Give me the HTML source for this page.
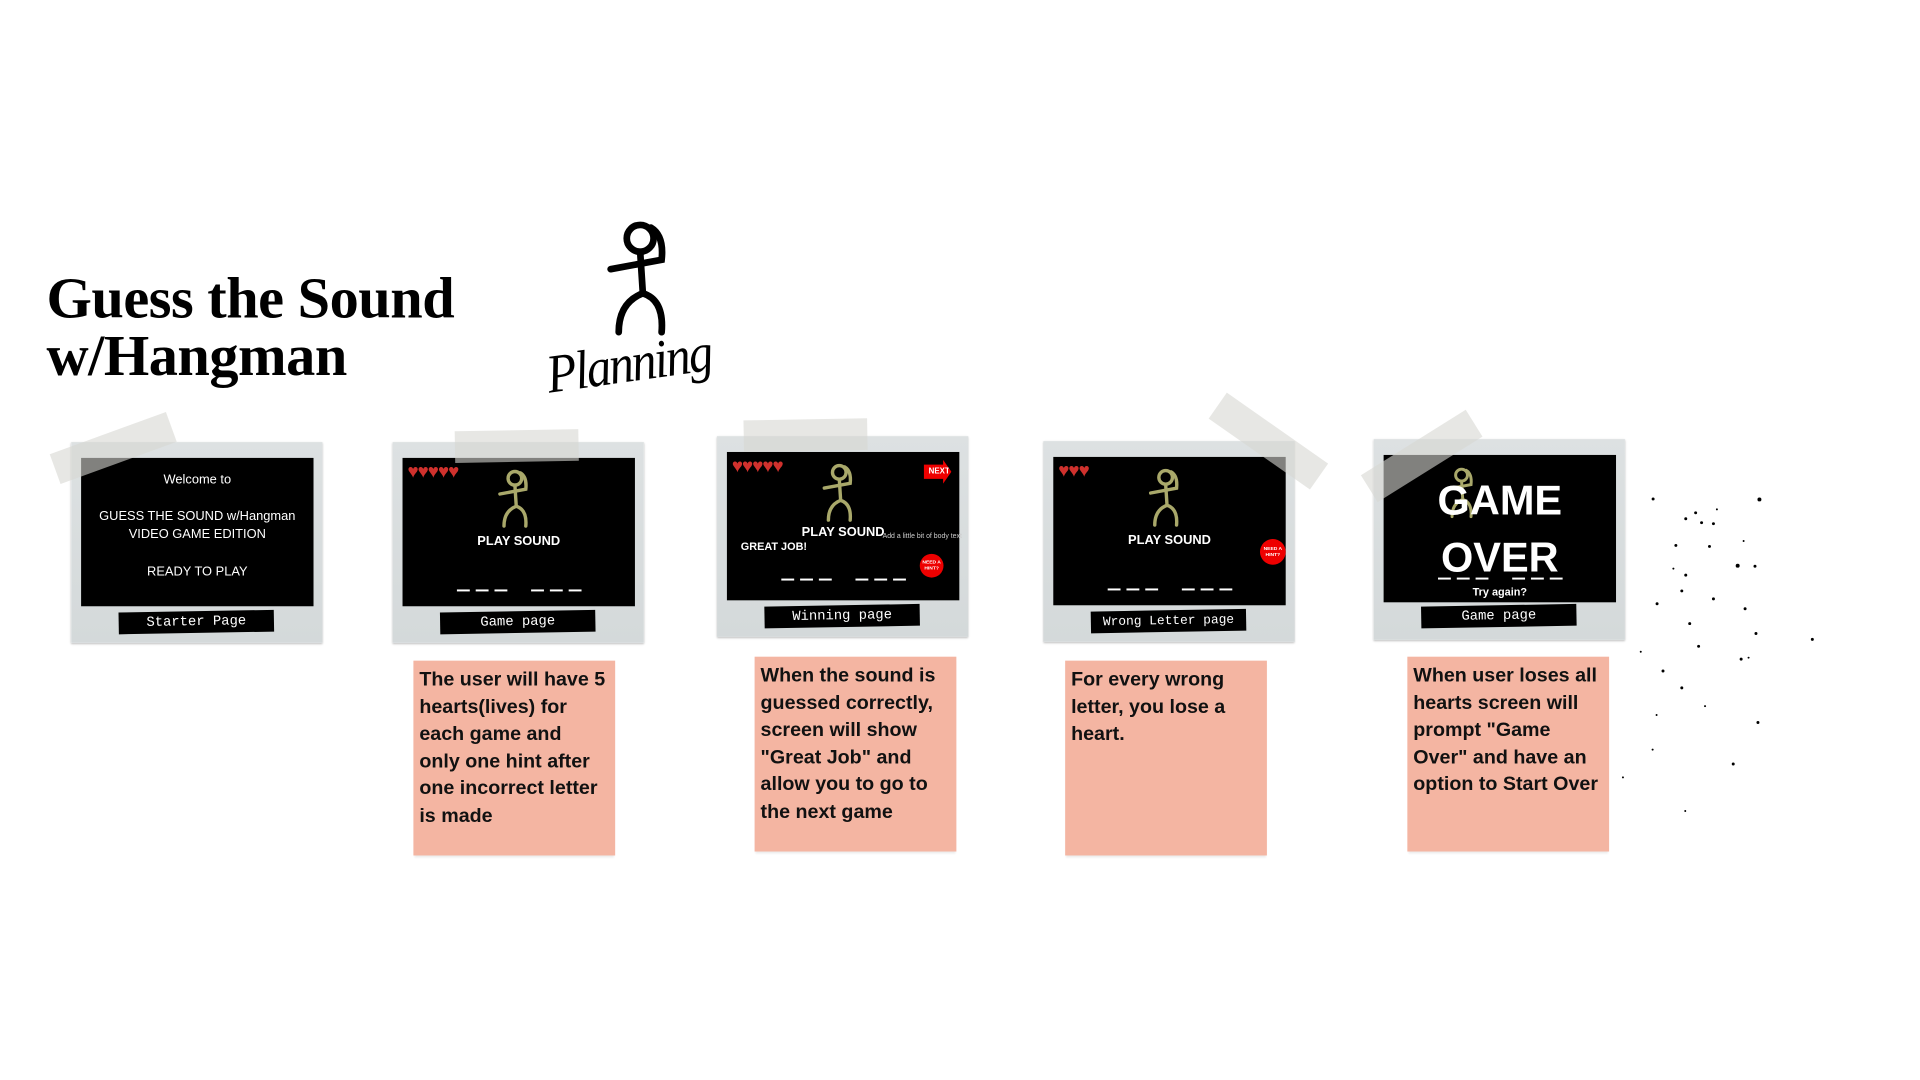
<!DOCTYPE html>
<html><head><meta charset="utf-8"><style>
*{margin:0;padding:0;box-sizing:border-box}
body{width:1920px;height:1080px;background:#fff;position:relative;overflow:hidden;font-family:"Liberation Sans",sans-serif}
#w{position:absolute;left:0;top:0;width:1940px;height:1092px;transform:scale(0.989);transform-origin:0 0}
.title{position:absolute;left:47px;top:272px;font-family:"Liberation Serif",serif;font-weight:700;font-size:59px;line-height:58px;color:#000;letter-spacing:-0.5px}
.plan{position:absolute;left:552px;top:338px;font-family:"Liberation Serif",serif;font-style:italic;font-size:50px;color:#000;font-weight:400;transform:rotate(-8deg) scaleY(1.1);letter-spacing:-2px}
.card{position:absolute;width:254px;height:203px;background:linear-gradient(180deg,#dde1e2,#d4d9da);box-shadow:0 1px 2px rgba(0,0,0,.25)}
.scr{position:absolute;left:10px;top:16px;width:235px;height:150px;background:#000;color:#fff;text-align:center}
.lab{position:absolute;left:48px;top:171px;width:157px;height:22px;background:#000;color:#fff;font-family:"Liberation Mono",monospace;font-size:14px;line-height:22px;text-align:center;transform:rotate(-1deg)}
.tape{position:absolute;background:rgba(215,215,210,.6);width:125px;height:32px}
.note{position:absolute;width:204px;height:197px;background:#f4b5a2;padding:6px 6px;font-weight:700;font-size:19.9px;line-height:27.5px;color:#111;box-shadow:0 3px 2px -1px rgba(0,0,0,.08)}
.hearts{position:absolute;left:5px;top:4px;color:#d0312d;font-size:19px;letter-spacing:-1px}
.ps{position:absolute;left:0;right:0;font-weight:700;font-size:13px}
.dash{position:absolute;left:0;right:0;display:flex;justify-content:center;gap:6px}
.dash i{display:block;width:13px;height:2px;background:#fff}
.dash b{display:block;width:12px}
.dots{position:absolute;left:18px;top:5px}
.dot{position:absolute;background:#000;border-radius:50%}
</style></head><body><div id="w">
<svg width="0" height="0" style="position:absolute"><defs>
<symbol id="fig" viewBox="0 0 60 90"><g fill="none" stroke-linecap="round" stroke-width="5"><circle cx="28" cy="14" r="10"/><path d="M36 6 Q46 12 44 30 L6 37"/><path d="M28 24 L30 55 Q46 60 44 84"/><path d="M30 55 Q12 62 12 84"/></g></symbol>
</defs></svg>

<div class="title">Guess the Sound<br>w/Hangman</div>
<svg style="position:absolute;left:605px;top:222px" width="90" height="122" viewBox="0 0 60 90"><use href="#fig" stroke="#000"/></svg>
<div class="plan">Planning</div>

<div class="card" style="left:72px;top:447px">
 <div class="scr" style="font-size:13px">
  <div style="position:absolute;left:0;right:0;top:14px">Welcome to</div>
  <div style="position:absolute;left:0;right:0;top:50px;line-height:18px">GUESS THE SOUND w/Hangman<br>VIDEO GAME EDITION</div>
  <div style="position:absolute;left:0;right:0;top:107px">READY TO PLAY</div>
 </div>
 <div class="lab">Starter Page</div>
</div>
<div class="tape" style="left:52px;top:437px;transform:rotate(-20deg)"></div>

<div class="card" style="left:397px;top:447px">
 <div class="scr">
  <div class="hearts">♥♥♥♥♥</div>
  <svg style="position:absolute;left:94px;top:11px" width="42" height="62" viewBox="0 0 60 90"><use href="#fig" stroke="#a9a86a"/></svg>
  <div class="ps" style="top:76px">PLAY SOUND</div>
  <div class="dash" style="top:133px"><i></i><i></i><i></i><b></b><i></i><i></i><i></i></div>
 </div>
 <div class="lab">Game page</div>
</div>
<div class="tape" style="left:460px;top:435px;transform:rotate(-1deg)"></div>

<div class="card" style="left:725px;top:441px">
 <div class="scr">
  <div class="hearts">♥♥♥♥♥</div>
  <div style="position:absolute;right:8px;top:8px;background:#e00;color:#fff;font-size:8px;font-weight:700;padding:2px 5px;clip-path:polygon(0 20%,70% 20%,70% 0,100% 50%,70% 100%,70% 80%,0 80%);width:28px;height:24px;line-height:20px">NEXT</div>
  <svg style="position:absolute;left:94px;top:11px" width="42" height="62" viewBox="0 0 60 90"><use href="#fig" stroke="#a9a86a"/></svg>
  <div class="ps" style="top:73px">PLAY SOUND</div>
  <div style="position:absolute;left:14px;top:90px;font-weight:700;font-size:11px">GREAT JOB!</div>
  <div style="position:absolute;left:155px;top:80px;font-size:7px;color:#ccc;width:85px;line-height:11px">Add a little bit of body text</div>
  <div style="position:absolute;left:195px;top:103px;width:24px;height:24px;border-radius:50%;background:#e00;font-size:5px;font-weight:700;line-height:6px;padding-top:6px">NEED A HINT?</div>
  <div class="dash" style="top:128px"><i></i><i></i><i></i><b></b><i></i><i></i><i></i></div>
 </div>
 <div class="lab">Winning page</div>
</div>
<div class="tape" style="left:752px;top:424px;transform:rotate(-1deg)"></div>

<div class="card" style="left:1055px;top:446px">
 <div class="scr">
  <div class="hearts">♥♥♥</div>
  <svg style="position:absolute;left:94px;top:11px" width="42" height="62" viewBox="0 0 60 90"><use href="#fig" stroke="#a9a86a"/></svg>
  <div class="ps" style="top:76px">PLAY SOUND</div>
  <div style="position:absolute;left:209px;top:83px;width:26px;height:26px;border-radius:50%;background:#e00;font-size:5px;font-weight:700;line-height:6px;padding-top:7px">NEED A HINT?</div>
  <div class="dash" style="top:133px"><i></i><i></i><i></i><b></b><i></i><i></i><i></i></div>
 </div>
 <div class="lab" style="font-size:13px">Wrong Letter page</div>
</div>
<div class="tape" style="left:1220px;top:430px;transform:rotate(35deg)"></div>

<div class="card" style="left:1389px;top:444px">
 <div class="scr" style="top:16px;height:149px">
  <svg style="position:absolute;left:62px;top:12px" width="36" height="54" viewBox="0 0 60 90"><use href="#fig" stroke="#a9a86a"/></svg>
  <div style="position:absolute;left:0;right:0;top:17px;font-weight:700;font-size:42px;line-height:58px">GAME<br>OVER</div>
  <div class="dash" style="top:124px"><i></i><i></i><i></i><b></b><i></i><i></i><i></i></div>
  <div style="position:absolute;left:0;right:0;top:133px;font-size:11px;font-weight:700">Try again?</div>
 </div>
 <div class="lab" style="top:168px">Game page</div>
</div>
<div class="tape" style="left:1375px;top:445px;transform:rotate(-32deg)"></div>

<div class="note" style="left:418px;top:668px;padding-right:9px">The user will have 5 hearts(lives) for each game and only one hint after one incorrect letter is made</div>
<div class="note" style="left:763px;top:664px">When the sound is guessed correctly, screen will show "Great Job" and allow you to go to the next game</div>
<div class="note" style="left:1077px;top:668px">For every wrong letter, you lose a heart.</div>
<div class="note" style="left:1423px;top:664px">When user loses all hearts screen will prompt "Game Over" and have an option to Start Over</div>

<div class="dots">
<div class="dot" style="left:1652px;top:498px;width:3px;height:3px"></div>
<div class="dot" style="left:1759px;top:498px;width:4px;height:4px"></div>
<div class="dot" style="left:1685px;top:518px;width:3px;height:3px"></div>
<div class="dot" style="left:1695px;top:512px;width:3px;height:3px"></div>
<div class="dot" style="left:1717px;top:509px;width:2px;height:2px"></div>
<div class="dot" style="left:1701px;top:522px;width:3px;height:3px"></div>
<div class="dot" style="left:1713px;top:523px;width:3px;height:3px"></div>
<div class="dot" style="left:1675px;top:545px;width:3px;height:3px"></div>
<div class="dot" style="left:1709px;top:546px;width:3px;height:3px"></div>
<div class="dot" style="left:1744px;top:541px;width:2px;height:2px"></div>
<div class="dot" style="left:1737px;top:565px;width:4px;height:4px"></div>
<div class="dot" style="left:1755px;top:566px;width:3px;height:3px"></div>
<div class="dot" style="left:1673px;top:569px;width:2px;height:2px"></div>
<div class="dot" style="left:1685px;top:575px;width:3px;height:3px"></div>
<div class="dot" style="left:1681px;top:591px;width:3px;height:3px"></div>
<div class="dot" style="left:1713px;top:599px;width:3px;height:3px"></div>
<div class="dot" style="left:1656px;top:604px;width:3px;height:3px"></div>
<div class="dot" style="left:1745px;top:609px;width:3px;height:3px"></div>
<div class="dot" style="left:1689px;top:624px;width:3px;height:3px"></div>
<div class="dot" style="left:1756px;top:634px;width:3px;height:3px"></div>
<div class="dot" style="left:1813px;top:640px;width:3px;height:3px"></div>
<div class="dot" style="left:1698px;top:647px;width:3px;height:3px"></div>
<div class="dot" style="left:1640px;top:653px;width:2px;height:2px"></div>
<div class="dot" style="left:1741px;top:660px;width:3px;height:3px"></div>
<div class="dot" style="left:1749px;top:659px;width:2px;height:2px"></div>
<div class="dot" style="left:1662px;top:672px;width:3px;height:3px"></div>
<div class="dot" style="left:1681px;top:689px;width:3px;height:3px"></div>
<div class="dot" style="left:1705px;top:708px;width:2px;height:2px"></div>
<div class="dot" style="left:1656px;top:717px;width:2px;height:2px"></div>
<div class="dot" style="left:1758px;top:724px;width:3px;height:3px"></div>
<div class="dot" style="left:1652px;top:752px;width:2px;height:2px"></div>
<div class="dot" style="left:1733px;top:766px;width:3px;height:3px"></div>
<div class="dot" style="left:1622px;top:780px;width:2px;height:2px"></div>
<div class="dot" style="left:1685px;top:814px;width:2px;height:2px"></div>
</div>
</div></body></html>
